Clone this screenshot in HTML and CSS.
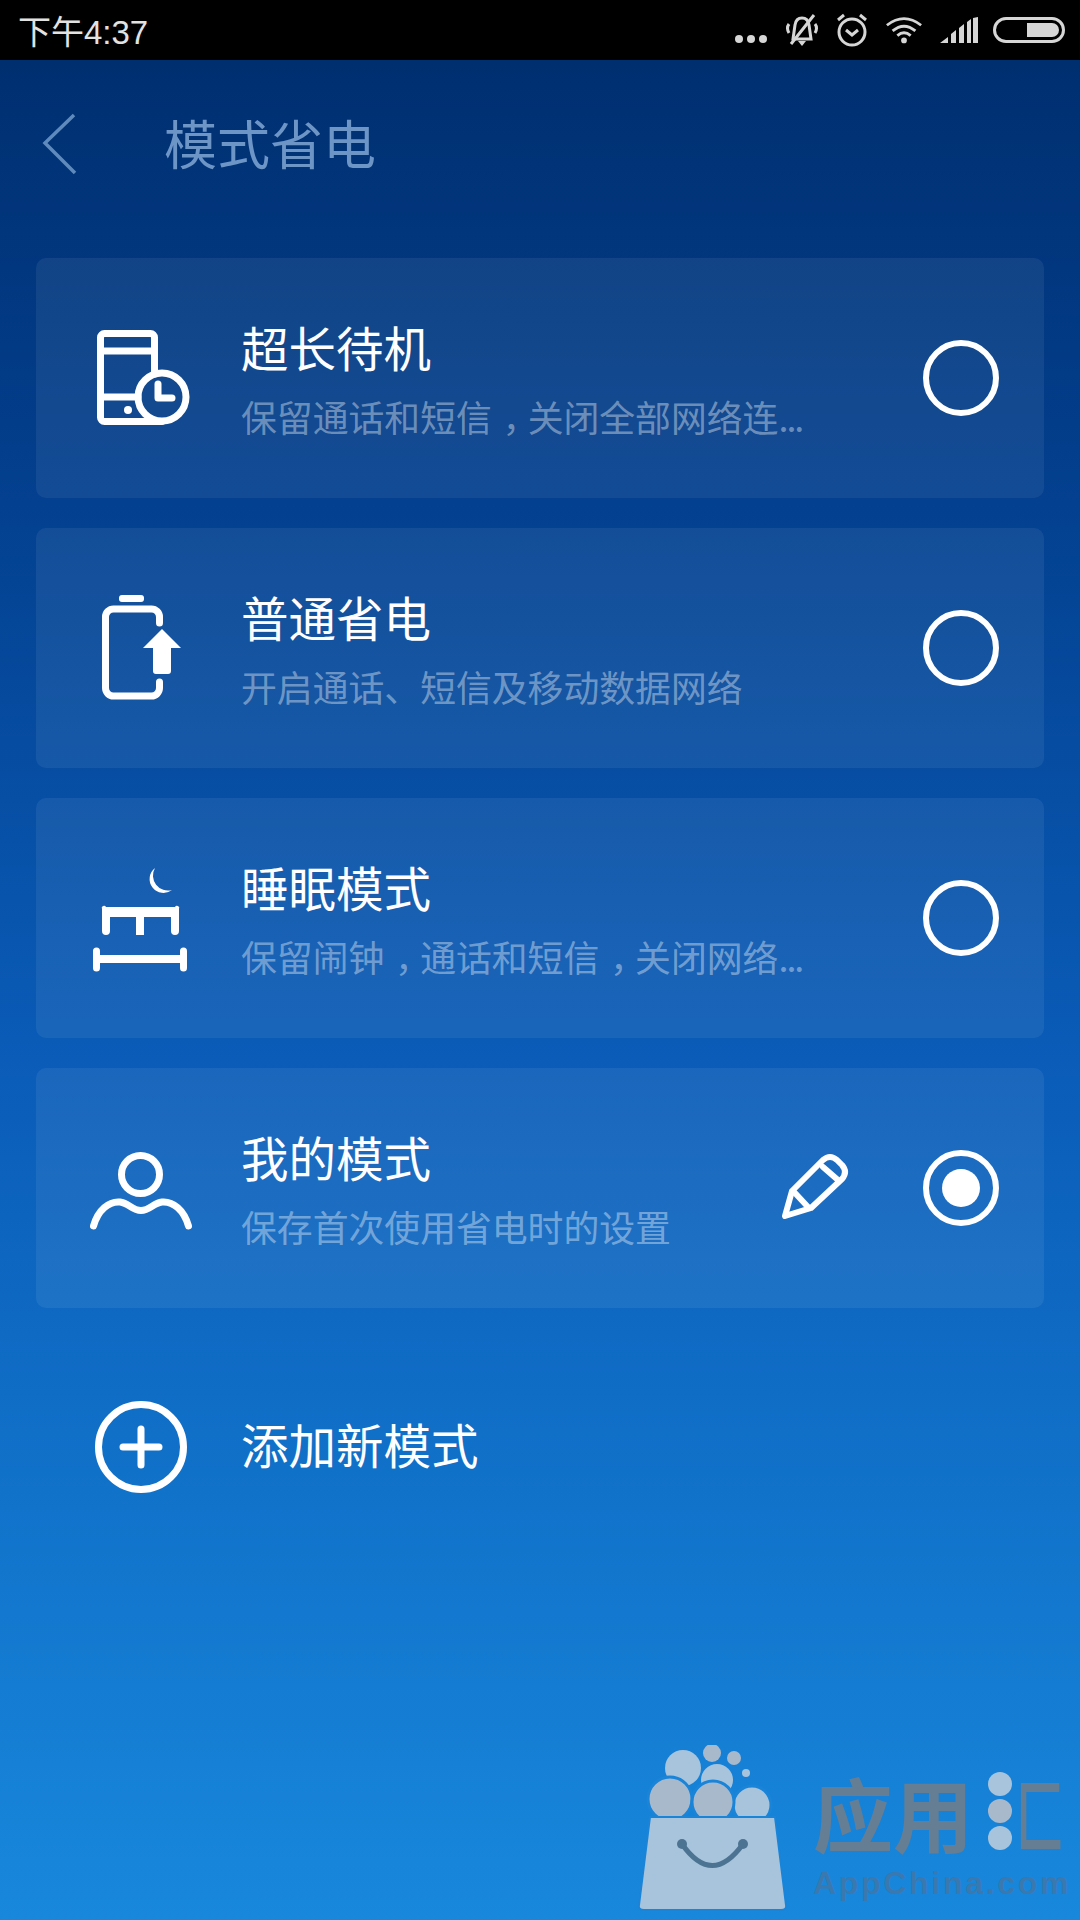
FILE: index.html
```html
<!DOCTYPE html>
<html lang="zh-CN">
<head>
<meta charset="UTF-8">
<meta name="viewport" content="width=device-width, initial-scale=1.0">
<title>模式省电</title>
<link rel="stylesheet" href="styles.css">
</head>
<body>
<div class="screen">
    <div class="statusbar">
        <span class="clock">下午4:37</span>
        <div class="status-icons">
            <svg class="st-dots" width="34" height="10" viewBox="0 0 34 10"><circle cx="5" cy="5" r="4"/><circle cx="17" cy="5" r="4"/><circle cx="29" cy="5" r="4"/></svg>
            <svg class="st-bell" width="34" height="34" viewBox="0 0 34 34">
                <path class="st-line" d="M8 26 L10 12 Q11 5 17 5 Q23 5 24 12 L26 26 Z"/>
                <path class="st-line" d="M4 11Q1 15 4 20M30 11Q33 15 30 20M6 31 L29 2"/>
                <path d="M13 28h8l-4 5z"/>
            </svg>
            <svg class="st-alarm" width="32" height="34" viewBox="0 0 32 34">
                <circle class="st-line" cx="16" cy="19" r="13"/>
                <path class="st-line" d="M10 17l6 5 6-5M2 7l6-5M30 7l-6-5"/>
            </svg>
            <svg class="st-wifi" width="38" height="28" viewBox="0 0 40 28">
                <path class="st-line" d="M2 9Q20-5 38 9M8 15Q20 5 32 15M13 20Q20 14 27 20"/>
                <circle cx="20" cy="25" r="3"/>
            </svg>
            <svg class="st-signal" width="38" height="26" viewBox="0 0 38 26">
                <path d="M0 26 L8 20 V26Z M11 17 L16 13 V26 H11Z M19 11 L24 7 V26 H19Z M27 5 L31 2 V26 H27Z M33 1 L38 0 V26 H33Z"/>
            </svg>
            <div class="st-battery"><span></span></div>
        </div>
    </div>

    <div class="titlebar">
        <svg class="back" width="36" height="62" viewBox="0 0 36 62"><path d="M32 2 L3 30 L33 60"/></svg>
        <h1>模式省电</h1>
    </div>

    <div class="modes">
        <div class="card">
            <svg class="ico" viewBox="0 0 100 100">
                <path d="M63.5 46V9.5a4 4 0 0 0-4-4H13.5a4 4 0 0 0-4 4V89.500a4 4 0 0 0 4 4H71"/>
                <path d="M9.500 23H63.500M9.500 69H47"/>
                <circle class="solid" cx="37" cy="82" r="4"/>
                <circle cx="71" cy="69" r="24"/>
                <path d="M67 56V70H81"/>
            </svg>
            <div class="info">
                <div class="name">超长待机</div>
                <div class="desc">保留通话和短信<span class="comma">，</span>关闭全部网络连<span class="more">...</span></div>
            </div>
            <div class="radio"></div>
        </div>

        <div class="card">
            <svg class="ico" viewBox="0 0 100 100">
                <rect class="solid" x="28" y="-3" width="25" height="7" rx="3"/>
                <path d="M68.500 25V19a8 8 0 0 0-8-8H22.500a8 8 0 0 0-8 8V90a8 8 0 0 0 8 8H60.500a8 8 0 0 0 8-8V84"/>
                <path class="solid" d="M71 31L90 50H80V73a3 3 0 0 1-3 3H65a3 3 0 0 1-3-3V50H52Z"/>
            </svg>
            <div class="info">
                <div class="name">普通省电</div>
                <div class="desc">开启通话、短信及移动数据网络</div>
            </div>
            <div class="radio"></div>
        </div>

        <div class="card">
            <svg class="ico" viewBox="0 0 100 100">
                <path class="solid" d="M64 0A13.500 13.500 0 1 0 81 22A15 15 0 0 1 64 0Z"/>
                <path class="solid" d="M11 41a2 2 0 0 1 4-2H84a2 2 0 0 1 4 2V63a4 4 0 0 1-8 0V49H53V67H45V49H19V63a4 4 0 0 1-8 0Z"/>
                <path class="solid" d="M2 83a3.500 3.500 0 0 1 7 0V87H89V83a3.500 3.500 0 0 1 7 0V100a3.500 3.500 0 0 1-7 0V95H9V100a3.500 3.500 0 0 1-7 0Z"/>
            </svg>
            <div class="info">
                <div class="name">睡眠模式</div>
                <div class="desc">保留闹钟<span class="comma">，</span>通话和短信<span class="comma">，</span>关闭网络<span class="more">...</span></div>
            </div>
            <div class="radio"></div>
        </div>

        <div class="card">
            <svg class="ico" viewBox="0 0 100 100">
                <circle cx="49.500" cy="36.500" r="19"/>
                <path d="M2.500 88C7 72 18 63 29 64C38 65 41 72.500 50 72.500C59 72.500 62 65 71 64C82 63 93 72 97.500 88"/>
            </svg>
            <div class="info">
                <div class="name">我的模式</div>
                <div class="desc">保存首次使用省电时的设置</div>
            </div>
            <svg class="edit" width="70" height="70" viewBox="0 0 70 70">
                <path d="M5 63L12 38L43 7Q50 1 57 7L62 12Q68 19 62 26L31 55Z"/>
                <path d="M15 40L28 54M43 14L58 27"/>
            </svg>
            <div class="radio on"></div>
        </div>

        <div class="add-row">
            <svg class="ico" viewBox="0 0 100 100">
                <circle cx="50" cy="50" r="42.500"/>
                <path d="M50 32V68M32 50H68"/>
            </svg>
            <span class="name">添加新模式</span>
        </div>
    </div>

    <!-- store mark in the corner -->
    <div class="mark">
        <svg width="165" height="175" viewBox="0 0 165 175">
            <circle class="mk-a" cx="53" cy="23" r="18"/>
            <circle class="mk-a" cx="87" cy="35" r="16"/>
            <circle class="mk-b" cx="82" cy="8" r="9"/>
            <circle class="mk-b" cx="104" cy="13" r="7"/>
            <circle class="mk-a" cx="116" cy="28" r="4"/>
            <circle class="mk-b edge" cx="40" cy="54" r="22"/>
            <circle class="mk-a edge" cx="122" cy="60" r="19"/>
            <circle class="mk-b edge" cx="83" cy="57" r="21"/>
            <path class="mk-bag" d="M20 72H145L156 160Q157 165 151 165H14Q8 165 9 160Z"/>
            <path class="mk-smile" d="M52 99Q82 142 113 99"/>
            <circle class="mk-dot" cx="52" cy="99" r="5"/>
            <circle class="mk-dot" cx="113" cy="99" r="5"/>
        </svg>
        <div class="mark-text">
            <div class="mark-cn">
                <span>应用</span>
                <div class="mark-dots"><i></i><i></i><i></i></div>
                <span class="mark-last">匚</span>
            </div>
            <div class="mark-en">AppChina.com</div>
        </div>
    </div>
</div>
</body>
</html>
```

FILE: styles.css
```css
*{
    box-sizing:border-box;
}
html,body{
    margin:0;
    padding:0;
}
body{
    font-family:"Noto Sans CJK SC","Noto Sans",sans-serif;
    color:#fff;
}
.screen{
    position:relative;
    width:1080px;
    height:1920px;
    overflow:hidden;
    background:linear-gradient(180deg,#002f70 60px,#03408f 500px,#0a5cb8 1060px,#1888dc 1920px);
}
.statusbar{
    display:flex;
    justify-content:space-between;
    align-items:center;
    height:60px;
    padding:0 15px 0 18px;
    background:#000;
}
.clock{
    font-family:"Liberation Sans","Noto Sans CJK SC",sans-serif;
    font-size:33px;
    color:#e2e2e2;
}
.status-icons{
    display:flex;
    align-items:center;
    gap:17px;
}
.status-icons svg{
    display:block;
    fill:#d6d6d6;
}
.status-icons .st-line{
    fill:none;
    stroke:#d6d6d6;
    stroke-width:3;
}
.st-dots{
    margin-top:18px;
}
.st-signal{
    margin-right:-2px;
}
.st-battery{
    width:72px;
    height:26px;
    padding:3px;
    display:flex;
    justify-content:flex-end;
    border:3px solid #d6d6d6;
    border-radius:13px;
}
.st-battery span{
    width:32px;
    background:#d6d6d6;
    border-radius:0 9px 9px 0;
}
.titlebar{
    display:flex;
    align-items:center;
    height:168px;
    padding-left:42px;
}
.back{
    fill:none;
    stroke:#5f8abd;
    stroke-width:3.500;
}
.titlebar h1{
    margin:0 0 0 86px;
    padding-bottom:5px;
    font-size:53px;
    font-weight:400;
    color:#6d95c6;
}
.modes{
    display:flex;
    flex-direction:column;
    gap:30px;
    padding:30px 36px 0;
}
.card{
    display:flex;
    align-items:center;
    height:240px;
    padding:0 45px 0 55px;
    background:rgba(255,255,255,.065);
    border-radius:10px;
}
.ico{
    flex:none;
    width:100px;
    height:100px;
    overflow:visible;
    fill:none;
    stroke:#fff;
    stroke-width:7;
    stroke-linecap:round;
    stroke-linejoin:round;
}
.ico .solid{
    fill:#fff;
    stroke:none;
}
.info{
    flex:1;
    margin-left:50px;
}
.name{
    font-size:47.500px;
    line-height:60px;
    color:#fff;
}
.desc{
    margin-top:15px;
    font-size:35.850px;
    line-height:48px;
    color:rgba(255,255,255,.4);
    white-space:nowrap;
}
/* nudge full-width commas to the middle of their cell */
.comma{
    margin-left:.3em;
    letter-spacing:-.3em;
}
.more{
    letter-spacing:-2px;
}
.radio{
    flex:none;
    display:flex;
    justify-content:center;
    align-items:center;
    width:76px;
    height:76px;
    margin-left:-1px;
    border:6px solid #fff;
    border-radius:50%;
}
.radio.on::after{
    content:"";
    width:38px;
    height:38px;
    background:#fff;
    border-radius:50%;
}
.edit{
    flex:none;
    margin-right:74px;
    fill:none;
    stroke:#fff;
    stroke-width:6;
    stroke-linejoin:round;
    stroke-linecap:round;
}
.add-row{
    display:flex;
    align-items:center;
    gap:50px;
    height:120px;
    margin-top:49px;
    padding-left:55px;
}
.add-row .name{
    padding-bottom:6px;
}
.mark{
    position:absolute;
    left:630px;
    top:1745px;
    display:flex;
    gap:18px;
    width:450px;
}
.mark svg{
    flex:none;
}
.mk-a{
    fill:#a7c4dc;
}
.mk-b{
    fill:#a9b9cc;
}
.edge{
    stroke:#1a84d8;
    stroke-width:3;
}
.mk-bag{
    fill:#a7c4dc;
    stroke:#1a84d8;
    stroke-width:2;
}
.mk-smile{
    fill:none;
    stroke:#4d7392;
    stroke-width:5;
}
.mk-dot{
    fill:#4d7392;
}
.mark-text{
    flex:none;
    width:260px;
    padding-top:24px;
}
.mark-cn{
    display:flex;
    align-items:center;
    height:84px;
    font-size:80px;
    line-height:84px;
    font-weight:700;
    white-space:nowrap;
    color:#667e93;
}
.mark-dots{
    flex:none;
    display:flex;
    flex-direction:column;
    gap:3px;
    margin:0 4px 0 15px;
}
.mark-dots i{
    display:block;
    width:24px;
    height:24px;
    background:#a7c4dc;
    border-radius:50%;
}
.mark-dots i:nth-child(2){
    background:#a9b9cc;
}
.mark-last{
    flex:none;
    transform:scaleX(.6);
    transform-origin:left center;
}
.mark-en{
    margin-top:12px;
    font-family:"Liberation Sans",sans-serif;
    font-size:32px;
    line-height:36px;
    font-weight:700;
    letter-spacing:2.700px;
    color:#3a78b0;
    white-space:nowrap;
}
```
